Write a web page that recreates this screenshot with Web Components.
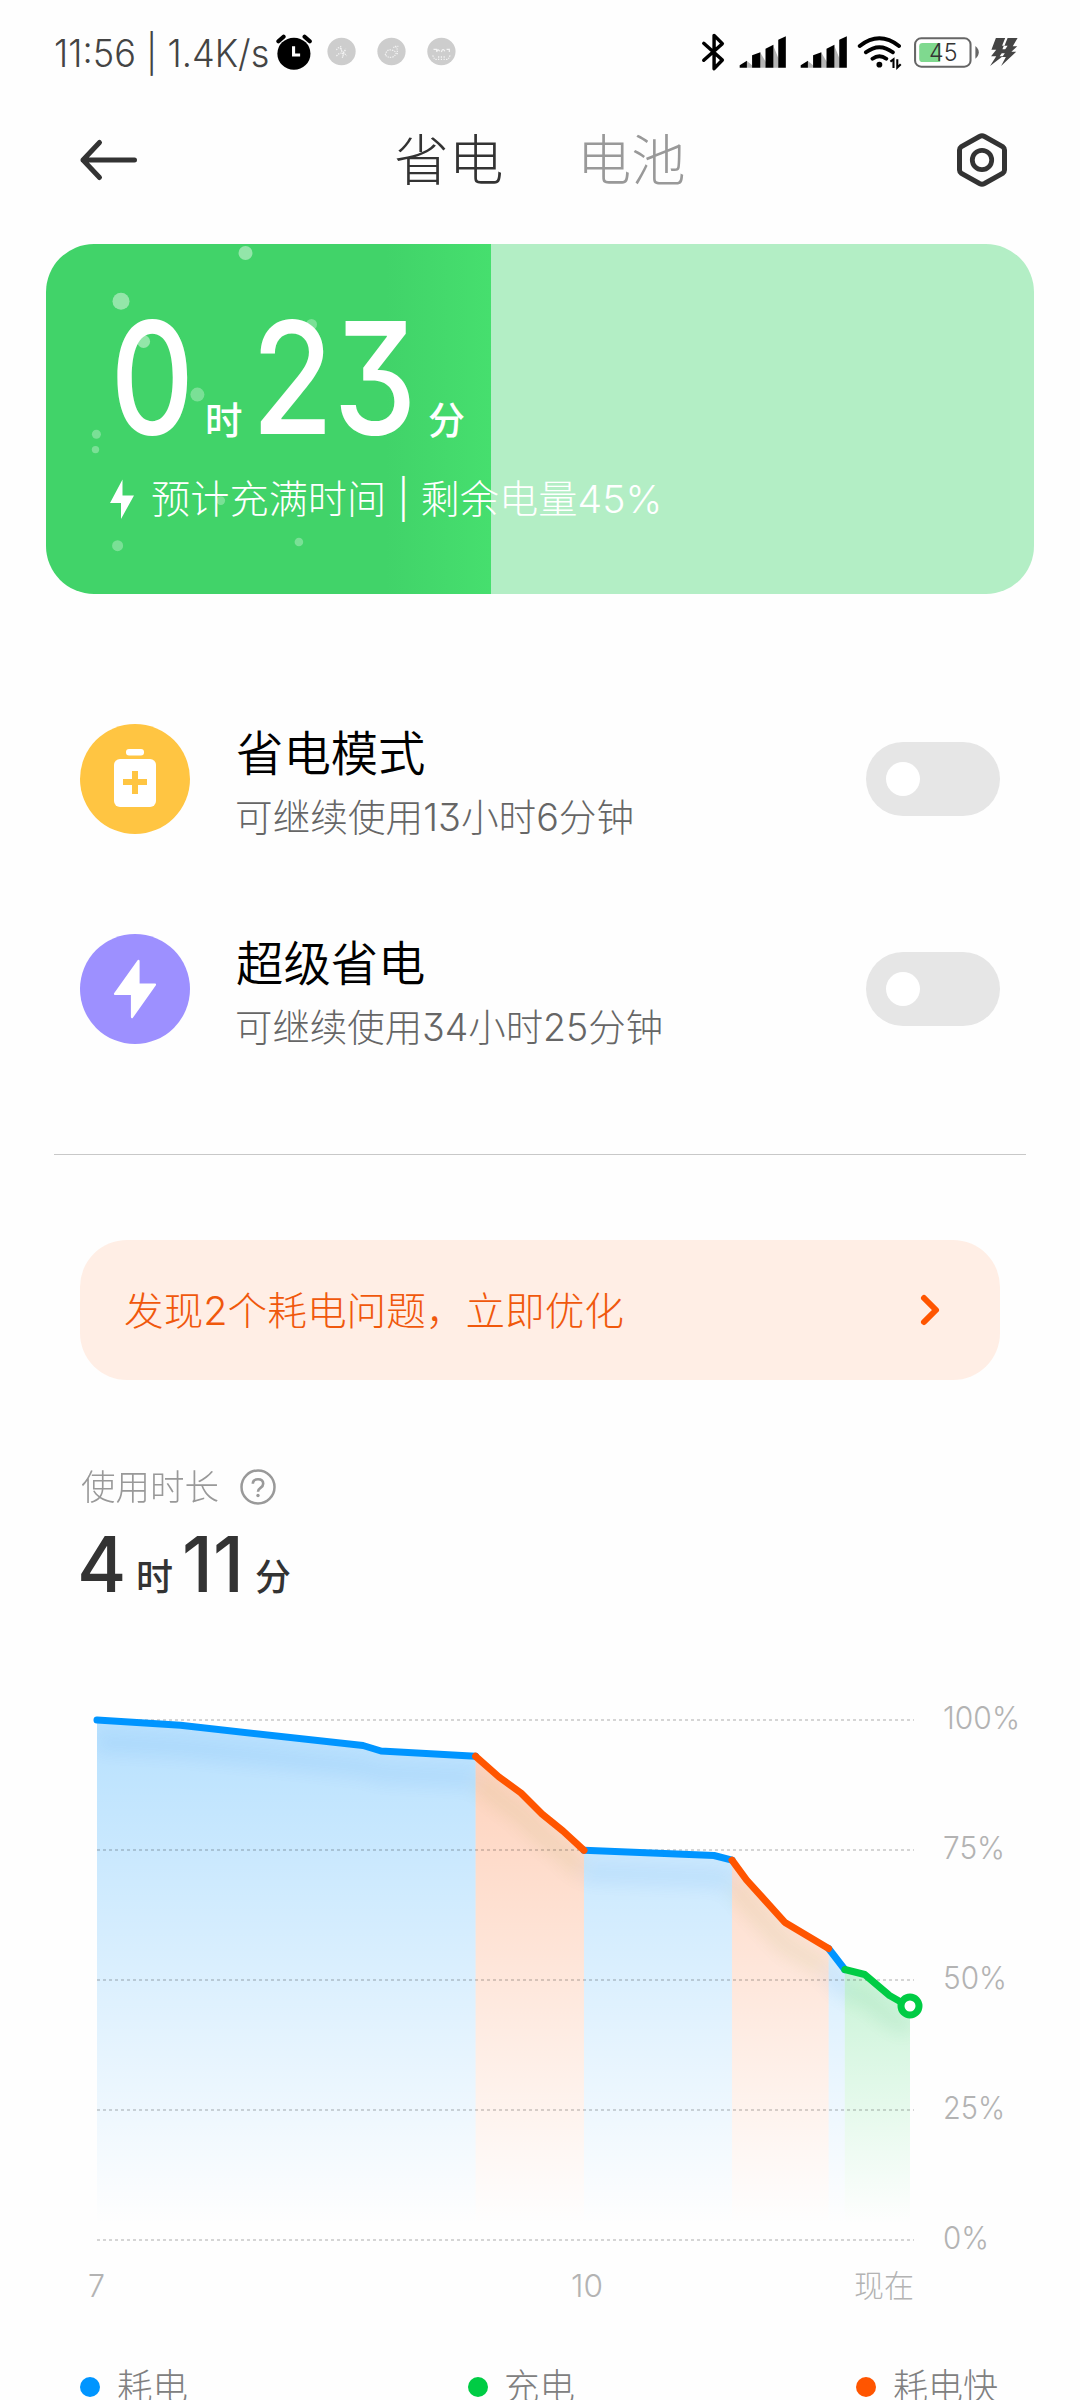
<!DOCTYPE html>
<html lang="zh-CN">
<head>
<meta charset="utf-8">
<title>省电与电池</title>
<style>
html,body{margin:0;padding:0;background:#fefefe}
body{width:1080px;height:2400px;overflow:hidden;font-family:Inter,"Noto Sans CJK SC",sans-serif;font-weight:300;color:#333}
</style>
</head>
<body>
<battery-page></battery-page>
<script>
const FONT = 'Inter, "Noto Sans CJK SC", sans-serif';
function define(name, html, init) {
  const t = document.createElement('template');
  t.innerHTML = html;
  customElements.define(name, class extends HTMLElement {
    connectedCallback() {
      if (this.shadowRoot) return;
      this.attachShadow({mode: 'open'}).append(t.content.cloneNode(true));
      if (init) init(this, this.shadowRoot);
    }
  });
}

/* Text whose ink fills exactly the width given in `w`, at size `s` and weight `wt`. */
define('fit-text', `<style>
:host{display:block;flex:none;white-space:pre}
span{display:inline-block;transform-origin:0 50%;font-feature-settings:"cv09"}
</style><span></span>`, (el, root) => {
  const w = +el.getAttribute('w'), s = +el.getAttribute('s'), wt = el.getAttribute('wt') || 300;
  const span = root.querySelector('span'), text = el.getAttribute('text');
  span.textContent = text;
  const c = document.createElement('canvas').getContext('2d');
  c.font = wt + ' ' + s + 'px ' + FONT;
  const m = c.measureText(text);
  const k = w / (m.actualBoundingBoxLeft + m.actualBoundingBoxRight);
  el.style.cssText += `;width:${w}px;font-size:${s}px;line-height:${Math.round(s * 1.2)}px;height:${Math.round(s * 1.2)}px;font-weight:${wt}`;
  span.style.transform = `translateX(${m.actualBoundingBoxLeft * k}px) scaleX(${k})`;
});

define('signal-bars', `<style>:host{display:block}svg{display:block}</style>
<svg width="48" height="43.33" viewBox="580 90 139.4 130" preserveAspectRatio="none">
<path fill="#b5b5b5" d="M603 183L618 196V203H603zM642 158L658 186V203H642zM680 138L695 176V203H680z"/>
<path d="M582 203V196L603 182V203zM618 203V166L642 157V203zM657 203V146L680 134V203zM694 203V119L716 109V203z"/></svg>`);

define('status-bar', `<style>
:host{display:flex;height:103px;box-sizing:border-box;padding-top:30px;align-items:flex-start}
svg{display:block;flex:none}
fit-text{color:#444}
.time{padding-top:1px;margin-left:56px}
.level{position:relative}
.level fit-text{position:absolute;top:8px;color:#333}
</style>
<fit-text class="time" w="212" s="37.500" text="11:56 | 1.4K/s"></fit-text>
<svg style="margin-left:8px" width="37" height="43.33" viewBox="801 90 107.4 130" preserveAspectRatio="none">
<circle cx="853" cy="161" r="48"/><path d="M808 124L823 110M899 124L884 110" stroke="#000" stroke-width="12" stroke-linecap="round"/><path d="M852 139V165H871" fill="none" stroke="#fff" stroke-width="9"/></svg>
<svg style="margin-left:11px" width="136" height="43.33" viewBox="942 90 395 130" preserveAspectRatio="none">
<g fill="#cdcdcd"><ellipse cx="993" cy="154.500" rx="41" ry="41"/><ellipse cx="1138" cy="154.500" rx="41" ry="41"/><ellipse cx="1283" cy="154.500" rx="41" ry="41"/></g>
<g fill="none" stroke="#f2f2f2" stroke-width="3.500" stroke-dasharray="4 3"><path d="M978 150q8 -14 14 0t14 -4M978 168q16 -18 30 0M990 138l8 32M1003 150l-8 24"/><path d="M1120 165q4 -20 22 -14q18 8 0 20q-14 4 -22 -6zM1143 143q10 -8 12 8v12M1148 139h10"/></g><g fill="none" stroke="#f4f4f4" stroke-width="3.500"><path d="M1260 148h9v6M1269 156q4 -12 9 -2M1283 156q4 -14 10 -2M1298 148h8v8"/><path stroke-dasharray="4 3" d="M1258 166q4 14 12 12M1308 166q-4 14 -12 12M1275 169v11M1283 169v11M1291 169v11"/></g></svg>
<svg style="margin-left:241px" width="25" height="43.33" viewBox="469 90 72.6 130" preserveAspectRatio="none">
<path d="M477 130L531 180L507 206V106L531 131L477 181" fill="none" stroke="#000" stroke-width="10" stroke-linecap="round" stroke-linejoin="round"/></svg>
<signal-bars style="margin-left:13px"></signal-bars>
<signal-bars style="margin-left:13px"></signal-bars>
<svg style="margin-left:9px" width="46" height="43.33" viewBox="924 90 133.600 130" preserveAspectRatio="none">
<g fill="none" stroke="#000" stroke-width="11.500" stroke-linecap="round"><path d="M932 138Q989 92 1046 138M950 157Q989 126 1028 157M969 176Q989 161 1009 176"/></g><circle cx="989" cy="194" r="8.500"/>
<path d="M1021 185L1030 178V204M1041 178V203L1051 193" fill="none" stroke="#000" stroke-width="6"/></svg>
<div class="level"><svg style="margin-left:10px" width="67" height="43.33" viewBox="1088 90 194.500 130" preserveAspectRatio="none">
<rect x="1094" y="115" width="161" height="85" rx="18" fill="#fff" stroke="#666" stroke-width="6"/><path d="M1167 129V186H1116Q1106 186 1106 176V139Q1106 129 1116 129z" fill="#7fd98f"/><path d="M1269 138Q1279 146 1279 157T1269 176z" fill="#666"/></svg>
<fit-text w="26" s="24.500" text="45" style="left:27px"></fit-text></div>
<svg style="margin-left:8.500px" width="29" height="43.33" viewBox="1307 90 84.200 130" preserveAspectRatio="none">
<path fill="#444" d="M1327 114H1354L1345 137H1352L1361 114H1390L1376 139H1389L1372 155H1386L1342 198L1356 171H1344L1310 198L1328 169H1313L1328 149H1314z"/><path d="M1350 137L1346 148H1354L1361 137zM1344 160L1338 169H1347L1353 160z" fill="#fefefe"/></svg>`);

define('page-header', `<style>
:host{display:flex;height:114px;align-items:center}svg{display:block;flex:none}
</style>
<svg style="margin-left:77px" width="64" height="56" viewBox="77 132 64 56"><path d="M134.500 160H83M99.500 142.500L83 160L99.500 177.500" fill="none" stroke="#333" stroke-width="5" stroke-linecap="round" stroke-linejoin="round"/></svg>
<fit-text style="margin-left:255px" w="106" s="54.500" text="省电"></fit-text>
<fit-text style="margin-left:82px;color:#999" w="100" s="54.500" text="电池"></fit-text>
<svg style="margin-left:270px" width="56" height="60" viewBox="954 130 56 60"><path d="M979.500 136.500Q982 135.200 984.500 136.500L1002.500 146.500Q1004.500 148 1004.500 150V170Q1004.500 172 1002.500 173.500L984.500 183.500Q982 184.800 979.500 183.500L961.500 173.500Q959.500 172 959.500 170V150Q959.500 148 961.500 146.500z" fill="none" stroke="#333" stroke-width="5"/><circle cx="982" cy="160" r="9.700" fill="none" stroke="#333" stroke-width="4.800"/></svg>`);

define('charge-card', `<style>
:host{display:flex;flex-direction:column;margin:27px 46px 0;height:350px;border-radius:48px;overflow:hidden;box-sizing:border-box;color:#fff;
background:linear-gradient(90deg,#41d369 0,#41d369 340px,#46df6e 445px,#b3eec5 445px);position:relative}
.bubbles{position:absolute;left:0;top:0}
.time,.note{display:flex;position:relative}
.time{height:160px;margin-top:53px;padding-left:71px;align-items:center}
.u{margin-top:86px}
.note{padding-left:64px;height:48px;align-items:center;margin-top:18px}
svg{display:block;flex:none}
</style>
<svg class="bubbles" width="445" height="350" viewBox="46 244 445 350" fill="#fff"><g fill-opacity=".43"><circle cx="245.500" cy="253" r="7"/><circle cx="121" cy="301.300" r="8.500"/><circle cx="143.600" cy="341.500" r="6.500"/></g><g fill-opacity=".3"><circle cx="311.500" cy="324.500" r="5.500"/><circle cx="197.400" cy="394.600" r="7"/><circle cx="96.400" cy="434.300" r="4.500"/><circle cx="95.500" cy="449.600" r="3.700"/><circle cx="220.800" cy="500.600" r="4.300"/><circle cx="117.600" cy="545.700" r="5.500"/><circle cx="298.900" cy="542" r="4.300"/></g></svg>
<div class="time"><fit-text w="71" s="156" wt="500" text="0"></fit-text><fit-text class="u" style="margin-left:18.500px" w="34.500" s="38" wt="500" text="时"></fit-text><fit-text style="margin-left:19px" w="150" s="156" wt="500" text="23"></fit-text><fit-text class="u" style="margin-left:19px" w="35" s="38" wt="500" text="分"></fit-text></div>
<div class="note"><svg width="24" height="40" viewBox="110 478 24 40"><path fill="#fff" d="M122.500 478.500L110 502H121V518L134 494.500H122.500z"/></svg><fit-text style="margin-left:17.500px" w="506" s="38.500" text="预计充满时间 | 剩余电量45%"></fit-text></div>`);

define('toggle-switch', `<style>:host{display:flex;align-items:center;flex:none;box-sizing:border-box;width:134px;height:74px;border-radius:37px;background:#e6e6e6;padding-left:20px}
i{width:34px;height:34px;border-radius:50%;background:#fff}</style><i></i>`);

define('mode-row', `<style>
:host{display:flex;height:210px;padding:0 80px;align-items:center}
.ic{width:110px;height:110px;flex:none}::slotted(svg){display:block}
.tx{margin-left:46.500px;flex:1;display:flex;flex-direction:column;gap:12px;padding-top:6px}
</style><div class="ic"><slot></slot></div><div class="tx"></div><toggle-switch></toggle-switch>`, (el, root) => {
  const a = n => el.getAttribute(n);
  root.querySelector('.tx').innerHTML = `<fit-text style="color:#000" w="187" s="47.500" wt="350" text="${a('name')}"></fit-text><fit-text style="color:#666" w="${a('w')}" s="38" text="${a('note')}"></fit-text>`;
});

define('issue-banner', `<style>:host{display:flex;box-sizing:border-box;margin:85px 80px 0;height:140px;border-radius:47px;background:#ffeee5;align-items:center;padding:0 58px 0 45px;justify-content:space-between;color:#f0580c}svg{display:block}</style>
<fit-text w="498" s="39" text="发现2个耗电问题，立即优化"></fit-text>
<svg width="24" height="38" viewBox="918 1291 24 38"><path d="M924 1298L936 1310L924 1322" fill="none" stroke="#ff5500" stroke-width="6" stroke-linecap="round" stroke-linejoin="round"/></svg>`);

define('usage-time', `<style>:host{display:block;padding-left:81px}.l{display:flex;height:50px;align-items:center;margin-top:82px;color:#999}.t{display:flex;height:80px;align-items:center;margin-top:12px}.u{margin-top:28px}svg{display:block}</style>
<div class="l"><fit-text w="137" s="35" text="使用时长"></fit-text><svg style="margin-left:20.500px" width="38" height="38" viewBox="238.500 1467.500 38 38"><circle cx="257.500" cy="1486.500" r="16.500" fill="none" stroke="#999" stroke-width="2.500"/><path d="M252.300 1483.200Q252.300 1478.800 257.500 1478.800T262.700 1483.200Q262.700 1485.500 260 1487.300Q257.500 1489 257.500 1491.200" fill="none" stroke="#999" stroke-width="2.600"/><circle cx="257.500" cy="1495" r="1.700" fill="#999"/></svg></div>
<div class="t"><fit-text w="42" s="77" wt="500" text="4"></fit-text><fit-text class="u" style="margin-left:15px" w="34" s="37" wt="500" text="时"></fit-text><fit-text style="margin-left:13px" w="53" s="77" wt="500" text="11"></fit-text><fit-text class="u" style="margin-left:18px" w="34" s="37" wt="500" text="分"></fit-text></div>`);

define('battery-chart', `<style>:host{display:block;height:716px}svg{display:block}text{font-size:30.500px;fill:#b3b3b3;font-weight:300}</style><div></div>`, (el, root) => {
  const B = '#0095ff', O = '#ff5500', G = '#00cc44';
  const seg = [
    [B, [[97,1720],[180.5,1725.3],[363,1745.5],[381,1751],[475.6,1756.3]]],
    [B, [[584,1850.3],[714,1855.5],[732,1860.2]]],
    [B, [[828.6,1948.5],[844.8,1969.5]]],
    [O, [[475.6,1756.3],[499,1777],[521,1793],[542,1814],[563,1831],[584,1850.3]]],
    [O, [[732,1860.2],[746.6,1880],[785,1922.5],[828.6,1948.5]]],
    [G, [[844.8,1969.5],[864.7,1974.5],[889.5,1995.5],[900,2001.5],[910,2006]]]
  ];
  const id = {[B]: 'b', [O]: 'o', [G]: 'g'};
  const pts = p => p.map(q => q.join(' ')).join('L');
  const area = p => `M${pts(p)}V2240H${p[0][0]}z`;
  const grad = (n, c, o) => `<linearGradient id="${n}" gradientUnits="userSpaceOnUse" x1="0" y1="1720" x2="0" y2="2240"><stop stop-color="${c}" stop-opacity="${o}"/><stop offset=".97" stop-color="${c}" stop-opacity="0"/></linearGradient>`;
  const t = (x, y, w, s) => `<text x="${x}" y="${y}" textLength="${w}" lengthAdjust="spacingAndGlyphs">${s}</text>`;
  root.querySelector('div').innerHTML = `<svg width="1080" height="716" viewBox="0 1624 1080 716">
<defs>${grad('b', B, .28)}${grad('o', O, .28)}${grad('g', G, .42)}
<clipPath id="c"><path d="${seg.map(s => area(s[1])).join('')}"/></clipPath>
<filter id="f" filterUnits="userSpaceOnUse" x="40" y="1680" width="940" height="420"><feGaussianBlur stdDeviation="8"/></filter></defs>
${seg.map(s => `<path d="${area(s[1])}" fill="url(#${id[s[0]]})"/>`).join('')}
<g clip-path="url(#c)"><g filter="url(#f)" transform="translate(0 22)" fill="none" stroke-width="20" opacity=".065">${seg.map(s => `<path d="M${pts(s[1])}" stroke="${s[0] === B ? '#0070e0' : s[0] === O ? '#608800' : '#009944'}"/>`).join('')}</g></g>
${[1720,1850,1980,2110,2240].map(y => `<path d="M97 ${y}H914" stroke="#000" stroke-opacity=".16" stroke-width="2" stroke-dasharray="3 3"/>`).join('')}
<g fill="none" stroke-width="7" stroke-linecap="round" stroke-linejoin="round">${seg.map(s => `<path d="M${pts(s[1])}" stroke="${s[0]}"/>`).join('')}</g>
<circle cx="910" cy="2006" r="9" fill="#fff" stroke="${G}" stroke-width="7"/>
${t(943,1729,77,'100%')}${t(943,1859,62,'75%')}${t(943,1989,64,'50%')}${t(943,2119,62,'25%')}${t(943,2249,46,'0%')}
${t(88,2297,17,'7')}${t(571,2297,32,'10')}${t(854,2296.500,60,'现在')}</svg>`;
});

define('legend-item', `<style>:host{display:flex;align-items:center;width:388px;flex:none;height:60px}i{width:20px;height:20px;border-radius:50%;flex:none;margin-right:17.500px}</style><i></i>`, (el, root) => {
  root.querySelector('i').style.background = el.getAttribute('color');
  root.querySelector('i').insertAdjacentHTML('afterend', `<fit-text style="color:#808080" w="${el.getAttribute('w')}" s="36" text="${el.getAttribute('name')}"></fit-text>`);
});

define('battery-page', `<style>
:host{display:flex;flex-direction:column;width:1080px;height:2400px;overflow:hidden;background:#fefefe}
:host>*{flex:none}
.modes{margin-top:80px}
hr{margin:60px 54px 0;border:0;height:1px;background:#c8c8c8;flex:none}
.legend{display:flex;padding-left:80px;margin-top:17px}
</style>
<status-bar></status-bar><page-header></page-header><charge-card></charge-card>
<section class="modes">
<mode-row name="省电模式" note="可继续使用13小时6分钟" w="395"><svg width="110" height="110" viewBox="80 724 110 110"><circle cx="135" cy="779" r="55" fill="#ffc542"/><g fill="#fff"><rect x="126" y="749" width="18" height="6.500" rx="3"/><rect x="114" y="759" width="42" height="48" rx="6"/></g><path d="M123 782H147M135 771V794" stroke="#ffc542" stroke-width="6"/></svg></mode-row>
<mode-row name="超级省电" note="可继续使用34小时25分钟" w="424"><svg width="110" height="110" viewBox="80 934 110 110"><circle cx="135" cy="989" r="55" fill="#9d90ff"/><path d="M138.500 961V984.500H155L132 1017V994H115z" fill="#fff" stroke="#fff" stroke-width="2.200" stroke-linejoin="round"/></svg></mode-row>
</section><hr>
<issue-banner></issue-banner><usage-time></usage-time><battery-chart style="margin-top:20px"></battery-chart>
<div class="legend"><legend-item color="#0095ff" name="耗电" w="69"></legend-item><legend-item color="#00cc44" name="充电" w="68"></legend-item><legend-item color="#ff5500" name="耗电快" w="103"></legend-item></div>`);
</script>
</body>
</html>
